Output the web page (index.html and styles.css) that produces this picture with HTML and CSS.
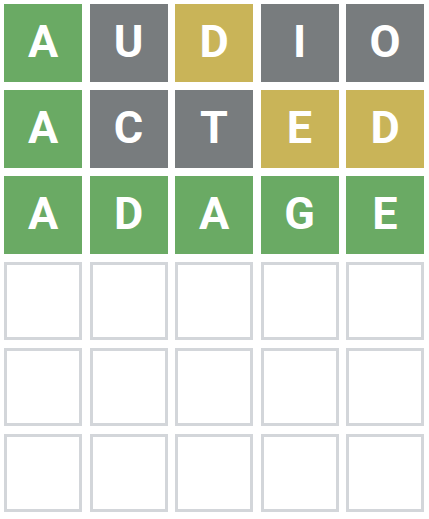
FILE: index.html
```html
<!DOCTYPE html>
<html lang="en">
<head>
    <meta charset="UTF-8">
    <meta name="viewport" content="width=device-width, initial-scale=1.0">
    <title>Wordle Board</title>
    <link rel="stylesheet" href="styles.css">
</head>
<body>
    <div class="board">
        <div class="tile correct">A</div>
        <div class="tile absent">U</div>
        <div class="tile present">D</div>
        <div class="tile absent">I</div>
        <div class="tile absent">O</div>

        <div class="tile correct">A</div>
        <div class="tile absent">C</div>
        <div class="tile absent">T</div>
        <div class="tile present">E</div>
        <div class="tile present">D</div>

        <div class="tile correct">A</div>
        <div class="tile correct">D</div>
        <div class="tile correct">A</div>
        <div class="tile correct">G</div>
        <div class="tile correct">E</div>

        <div class="tile empty"></div>
        <div class="tile empty"></div>
        <div class="tile empty"></div>
        <div class="tile empty"></div>
        <div class="tile empty"></div>

        <div class="tile empty"></div>
        <div class="tile empty"></div>
        <div class="tile empty"></div>
        <div class="tile empty"></div>
        <div class="tile empty"></div>

        <div class="tile empty"></div>
        <div class="tile empty"></div>
        <div class="tile empty"></div>
        <div class="tile empty"></div>
        <div class="tile empty"></div>
    </div>
</body>
</html>
```

FILE: styles.css
```css
body {
    margin: 0;
    background-color: #ffffff;
    font-family: Roboto, "Liberation Sans", sans-serif;
}

.board {
    display: grid;
    grid-template-columns: repeat(5, 78px);
    grid-auto-rows: 78px;
    column-gap: 7.5px;
    row-gap: 8px;
    padding: 4px 0 0 4px;
}

.tile {
    display: flex;
    justify-content: center;
    align-items: center;
    box-sizing: border-box;
    color: #ffffff;
    font-size: 45px;
    font-weight: bold;
    padding-bottom: 4px;
}

.correct {
    background-color: #6aaa64;
}

.present {
    background-color: #c9b458;
}

.absent {
    background-color: #787c7e;
}

.empty {
    border: 3px solid #d3d6da;
}
```
